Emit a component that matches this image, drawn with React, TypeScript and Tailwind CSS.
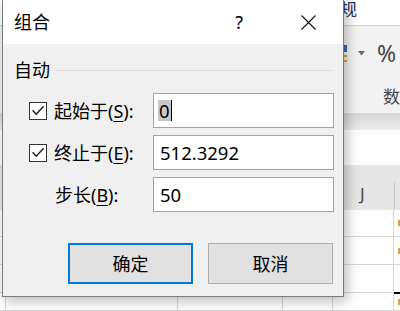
import React from "react";

function Check() {
  return (
    <div className="w-[18px] h-[18px] bg-white border border-[#333333] box-border flex items-center justify-center shrink-0">
      <svg width="16" height="16" viewBox="0 0 16 16">
        <path d="M2.6 7.2 L6.2 11.2 L13.6 3.2" fill="none" stroke="#1a1a1a" strokeWidth="1.4" />
      </svg>
    </div>
  );
}

function Row({ checked, label, acc, rest, value, first }: { checked: boolean; label: string; acc: string; rest: string; value: string; first?: boolean }) {
  return (
    <div className="flex items-center h-[35px] pl-[26px]">
      {checked ? <Check /> : <div className="w-[18px] shrink-0" />}
      <div className={"w-[106px] shrink-0 whitespace-nowrap text-[18px] leading-[22px] text-black " + (checked ? "pl-[7px]" : "pl-[8px]")}>
        {label}(<span className="underline underline-offset-[3px] decoration-1">{acc}</span>){rest}
      </div>
      <div className={"w-[181px] shrink-0 h-[35px] bg-white border border-[#a3a3a3] box-border flex items-center " + (first ? "pl-[4px]" : "pl-[6px]")}>
        {first ? (
          <>
            <span className="bg-[#c8c8c8] px-[1px] leading-[21px] text-[18.5px] text-black">{value}</span>
            <span className="w-[1.5px] h-[21px] bg-black" />
          </>
        ) : (
          <span className="text-[18.5px] leading-[22px] text-black">{value}</span>
        )}
      </div>
    </div>
  );
}

export default function App() {
  return (
    <div className="relative w-[400px] h-[311px] overflow-hidden bg-white font-['Noto_Sans','Noto_Sans_CJK_SC',sans-serif]">
      {/* Excel background */}
      <div className="flex flex-col w-[400px] h-[311px]">
        <div className="h-[26px] bg-white border-b border-[#d2d2d2] box-border flex items-start pl-[323px] whitespace-nowrap">
          <span className="text-[17px] leading-[20px] text-[#1c2f63]">常规</span>
        </div>
        <div className="h-[87px] bg-[#f3f3f3] flex flex-col">
          <div className="flex items-center h-[20px] mt-[17px] pl-[342px]">
            <div className="w-[5px] h-[17px] flex flex-col gap-[3px]">
              <div className="h-[7px] bg-[#3a6db5]" />
              <div className="h-[2px] bg-[#e3a33a]" />
              <div className="h-[2px] bg-[#e3a33a]" />
            </div>
            <svg className="ml-[11px]" width="7" height="5" viewBox="0 0 7 5">
              <path d="M0 0 H7 L3.5 4.5 Z" fill="#6a6a6a" />
            </svg>
            <span className="ml-[12px] text-[23px] leading-[20px] text-[#444444]">%</span>
          </div>
          <div className="mt-[25px] pl-[383px] whitespace-nowrap text-[17px] leading-[18px] text-[#444444]">数字</div>
        </div>
        <div className="h-[17px] bg-gradient-to-b from-[#d6d6d6] to-[#ececec]" />
        <div className="h-[35px] bg-white" />
        <div className="h-[45px] bg-[#e6e6e6] flex">
          <div className="w-[394px] flex items-end justify-start pl-[360px] pb-[6px]">
            <span className="text-[17px] leading-[20px] text-[#444444]">J</span>
          </div>
          <div className="mt-[17px] w-px bg-[#c8c8c8]" />
        </div>
        {[27, 28, 28, 18].map((h, i) => (
          <div key={i} className="grid grid-cols-[6px_172px_105px_50px_61px_1fr] border-b border-[#d6d6d6] box-border" style={{ height: h }}>
            <div className="border-r border-[#d6d6d6]" />
            <div className="border-r border-[#d6d6d6]" />
            <div className="border-r border-[#d6d6d6]" />
            <div className="border-r border-[#d6d6d6]" />
            <div className="border-r border-[#d6d6d6]" />
            <div className="flex items-center">
              {i !== 2 && <div className="ml-[4px] w-[2px] h-[6px] bg-[#e0a040]" />}
            </div>
          </div>
        ))}
      </div>
      <div className="absolute left-[394px] top-[292px] w-[6px] h-[2px] bg-black" />

      {/* Dialog window */}
      <div className="absolute left-[2px] top-[-1px] w-[342px] h-[298px] box-border border border-[#7c7c7c] bg-[#f0f0f0] shadow-[3px_4px_12px_rgba(0,0,0,0.28)] flex flex-col">
        <div className="h-[44px] bg-white flex items-center pl-[11px] pr-[27px] shrink-0">
          <span className="text-[18px] leading-[22px] text-black">组合</span>
          <div className="flex-1" />
          <span className="text-[18px] leading-[22px] text-black">?</span>
          <svg className="ml-[58px]" width="15" height="15" viewBox="0 0 15 15">
            <path d="M0.5 0.5 L14.5 14.5 M14.5 0.5 L0.5 14.5" stroke="#111111" strokeWidth="1.1" fill="none" />
          </svg>
        </div>
        <div className="flex-1 flex flex-col pt-[15px]">
          <div className="h-[22px] flex items-center pl-[11px] pr-[10px]">
            <span className="text-[18px] leading-[22px] text-black">自动</span>
            <div className="flex-1 ml-[5px] h-px bg-[#dcdcdc]" />
          </div>
          <div className="mt-[12px] flex flex-col gap-[7px]">
            <Row checked label="起始于" acc="S" rest=":" value="0" first />
            <Row checked label="终止于" acc="E" rest=":" value="512.3292" />
            <Row checked={false} label="步长" acc="B" rest=":" value="50" />
          </div>
          <div className="mt-[31px] flex pl-[65px] gap-[15px]">
            <button className="w-[125px] h-[41px] box-border border-2 border-[#0078d7] bg-[#e1e1e1] text-[18px] leading-[22px] text-black">
              确定
            </button>
            <button className="w-[125px] h-[41px] box-border border border-[#adadad] bg-[#e1e1e1] text-[18px] leading-[22px] text-black">
              取消
            </button>
          </div>
        </div>
      </div>
    </div>
  );
}
